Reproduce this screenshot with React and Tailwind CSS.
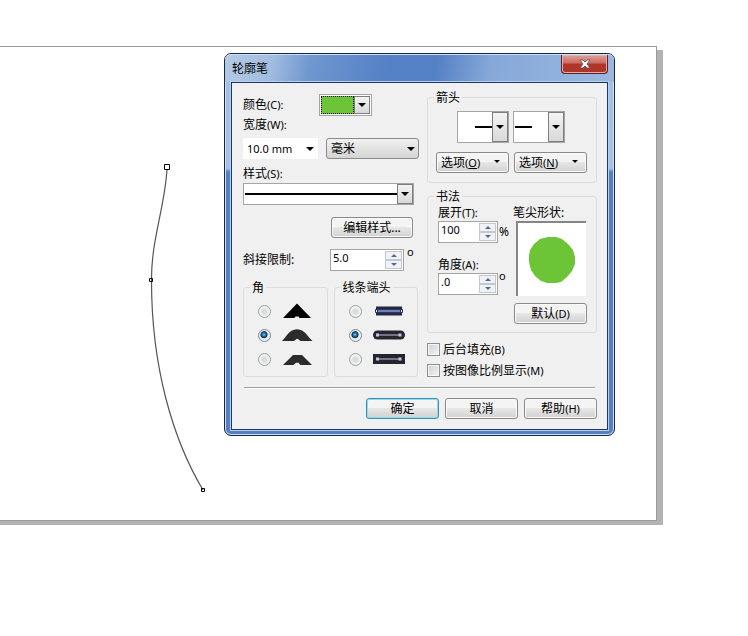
import React, { useState } from 'react';
import clsx from 'clsx';

const BTN = 'h-[21px] rounded-[3px] border border-[#8a8a8a] bg-linear-to-b from-[#f4f4f4] from-45% via-[#e6e6e6] via-50% to-[#d2d2d2] shadow-[inset_0_0_0_1px_#fafafa]';

const Arrow = ({ className }) => (
  <svg viewBox="0 0 8 4" className={clsx('h-1 w-2 shrink-0', className)} fill="#000">
    <path d="M0 0h8L4 4z" />
  </svg>
);

// Chinese caption followed by its smaller latin shortcut
const Caption = ({ text, hot }) => (
  <>{text}<span className="text-[11px]">{hot}</span></>
);

const Button = ({ children, className, primary }) => (
  <button type="button"
    className={clsx(BTN, 'flex w-[73px] items-center justify-center whitespace-nowrap', className,
      primary && 'border-[#3c8fb0]! shadow-[inset_0_0_0_1px_#8fdcf0]!')}>
    {children}
  </button>
);

const OptionButton = ({ hot }) => (
  <button type="button" className={clsx(BTN, 'flex w-[73px] items-center justify-between pl-1 pr-2')}>
    <span>选项<span className="text-[11px]">(<u>{hot}</u>)</span></span>
    <Arrow className="mb-0.5 h-[3px]! w-1.5!" />
  </button>
);

const DropBox = ({ label, className, children }) => (
  <button type="button" aria-label={label} aria-haspopup="listbox"
    className={clsx('flex border border-[#a5a5a5] bg-white', className)}>
    <span className="flex h-full flex-1 items-center">{children}</span>
    <span className="flex h-full w-4 items-center justify-center border border-[#7d7d7d] bg-linear-to-b from-[#f4f4f4] to-[#d8d8d8]">
      <Arrow />
    </span>
  </button>
);

const Select = ({ label, value, options, className }) => (
  <span className="relative flex">
    <select aria-label={label} defaultValue={value}
      className={clsx('h-[21px] w-full appearance-none pl-1', className)}>
      {options.map(o => <option key={o}>{o}</option>)}
    </select>
    <Arrow className="pointer-events-none absolute right-1 top-[9px]" />
  </span>
);

const Spinner = ({ id, initial, step, digits, className }) => {
  const [value, setValue] = useState(initial);
  const bump = d => setValue(((parseFloat(value) || 0) + d).toFixed(digits));
  return (
    <span className={clsx('flex h-[22px] border border-[#a5a5a5] bg-white p-px', className)}>
      <input id={id} value={value} onChange={e => setValue(e.target.value)}
        className="min-w-0 flex-1 pb-1 pl-px text-[11px] outline-none" />
      <span className="flex w-[17px] flex-col">
        <button type="button" aria-label="+" onClick={() => bump(step)}
          className="flex flex-1 items-center justify-center border border-[#c3c7d0] bg-[#f1f2f5]">
          <svg viewBox="0 0 6 3" className="h-[3px] w-1.5" fill="#53679f"><path d="M0 3h6L3 0z" /></svg>
        </button>
        <button type="button" aria-label="-" onClick={() => bump(-step)}
          className="flex flex-1 items-center justify-center border border-[#c3c7d0] bg-[#f1f2f5]">
          <svg viewBox="0 0 6 3" className="h-[3px] w-1.5" fill="#53679f"><path d="M0 0h6L3 3z" /></svg>
        </button>
      </span>
    </span>
  );
};

const Group = ({ title, className, children }) => (
  <fieldset className={clsx('rounded-[3px] border border-[#dadcdd] px-2', className)}>
    <legend className="-mx-0.5 h-4 px-0.5 leading-[18px]">{title}</legend>
    {children}
  </fieldset>
);

const CORNERS = [
  { id: '尖角', art: <path d="M1 16 15 1.500 29 16H17.500l-1-1.500h-3l-1 1.500z" fill="#000" /> },
  { id: '圆角', art: <path d="M0 15C3 12 6 7 9.500 4.800 13 2.800 17 2.800 20.500 4.800 24 7 27 12 30.500 15H18.500l-2.500-2h-1.500l-2.500 2z" fill="#2b2b2b" /> },
  { id: '斜角', art: <path d="M1 15 11 5h9L30 15H18.500l-2-2.300h-2.500L11.500 15z" fill="#2b2b2b" /> },
];

const CapLine = ({ x1, x2 }) => (
  <g fill="#c4c2ee">
    <path d={`M${x1} 8.500H${x2}v1H${x1}z`} />
    <rect x={x1 - 1.5} y="7.500" width="3" height="3" />
    <rect x={x2 - 1.5} y="7.500" width="3" height="3" />
  </g>
);

const CAPS = [
  { id: '方形', art: (
    <>
      <path d="M3 4.500h26v9H3z" fill="#252b30" />
      <path d="M3 7h26v4H3z" fill="#27337c" />
      <path d="M3 8.500h26v1H3z" fill="#c3cdf2" />
      <path d="M2.500 7.500h2v3h-2zM27.500 7.500h2v3h-2z" fill="#fff" stroke="#1f2a70" />
    </>
  ) },
  { id: '圆形', art: <><rect x="0" y="4.500" width="32" height="9" rx="4.500" fill="#26252b" /><CapLine x1={4.5} x2={27} /></> },
  { id: '延伸', art: <><path d="M0 4h32v10H0z" fill="#24252b" /><CapLine x1={4.5} x2={27} /></> },
];

const RadioList = ({ name, items }) => {
  const [picked, setPicked] = useState(items[1].id);
  return (
    <div className="flex flex-col pb-[5px] pl-1.5 pt-1">
      {items.map(({ id, art }) => (
        <label key={id} className="flex h-6 items-center gap-[11px]">
          <input type="radio" name={name} aria-label={id} checked={picked === id} onChange={() => setPicked(id)}
            className="size-[13px] shrink-0 appearance-none rounded-full border border-[#9a9c9e] bg-[radial-gradient(circle,#d9dbdc_25%,#f3f3f3_60%)] shadow-[inset_0_0_0_1px_#f4f4f4] checked:border-[#7b8590] checked:bg-[radial-gradient(circle_at_45%_42%,#7fd4f4_0%,#1d6fa5_20%,#0d3453_36%,#e4eaee_46%)]" />
          <svg viewBox="0 0 32 18" className="h-[18px] w-8 shrink-0">{art}</svg>
        </label>
      ))}
    </div>
  );
};

const Check = ({ text, hot }) => (
  <label className="flex h-[21px] items-center gap-[3px] whitespace-nowrap">
    <input type="checkbox"
      className="size-[13px] appearance-none border border-[#8e8f8f] bg-linear-to-br from-[#cfd2d4] to-[#f4f4f4] shadow-[inset_0_0_0_1px_#f4f4f4] checked:from-[#2a6fa5] checked:to-[#2a6fa5]" />
    <span><Caption text={text} hot={hot} /></span>
  </label>
);

const OutlineDialog = () => (
  <div role="dialog" aria-label="轮廓笔"
    className="flex w-[391px] shrink-0 flex-col rounded-[7px] border border-[#14264a] bg-linear-to-b from-[#a3c0e4] from-0% via-[#a5c1e6] via-30% to-[#5580bd] to-31% shadow-[inset_0_0_0_1px_#cfe0f4]">
    <div className="flex h-[28px] items-start justify-between rounded-t-[6px] border-t border-[#cfe0f4] bg-[linear-gradient(100deg,#b4cae6_0%,#a3bde0_12%,#6f97cf_22%,#5480c5_42%,#5480c5_54%,#86a8d9_68%,#9ab8e0_100%)] pl-[7px] pr-1.5">
      <h1 className="pt-[5px] leading-[18px]">轮廓笔</h1>
      <button type="button" aria-label="关闭"
        className="flex h-[19px] w-[47px] items-center justify-center rounded-b-[4px] border border-t-0 border-[#5c1f24] bg-linear-to-b from-[#dba29a] from-0% via-[#cb6a5f] via-45% to-[#b03529] to-50% shadow-[inset_0_0_0_1px_#e3b0a8]">
        <svg viewBox="0 0 12 10" className="h-2.5 w-3">
          <path d="M1 1h3l2 2 2-2h3L8 5l3 4H8L6 7 4 9H1l3-4z" fill="#fff" stroke="#5b4b58" strokeWidth=".8" />
        </svg>
      </button>
    </div>

    <div className="mx-1.5 mb-[5px] border border-[#1d3668] bg-[#f0f0f0] px-[10px] pb-[10px] shadow-[0_0_0_1px_#b9d0ee]">
      <div className="flex justify-between">
        <div className="w-[177px] pl-px pt-[11px]">
          <div className="flex items-center">
            <span className="w-[76px] leading-[18px]"><Caption text="颜色" hot="(C):" /></span>
            <DropBox label="颜色" className="h-[22px] w-[53px] p-px">
              <span className="h-full w-full border border-dotted border-black bg-[#6cc437]" />
            </DropBox>
          </div>
          <div className="h-4 leading-[18px]"><Caption text="宽度" hot="(W):" /></div>
          <div className="mt-1.5 grid grid-cols-[75px_93px] justify-between">
            <Select label="宽度" value="10.0 mm" options={['0.2 mm', '1.0 mm', '10.0 mm']} className="bg-white text-[11px]" />
            <Select label="单位" value="毫米" options={['毫米', '厘米', '英寸']}
              className="rounded-[3px] border border-[#8a8a8a] bg-linear-to-b from-[#f1f1f1] to-[#d4d4d4]" />
          </div>
          <div className="mt-1.5 h-4 leading-[18px]"><Caption text="样式" hot="(S):" /></div>
          <DropBox label="样式" className="mt-0.5 h-[22px] w-[171px] pl-px">
            <span className="h-0.5 w-full bg-black" />
          </DropBox>
          <Button className="ml-[88px] mt-3 w-[82px]!">编辑样式...</Button>
          <div className="mt-[11px] flex h-[22px]">
            <label htmlFor="miter" className="w-[87px] self-center">斜接限制:</label>
            <Spinner id="miter" initial="5.0" step={1} digits={1} className="w-[74px]" />
            <span className="-mt-[3px] pl-[3px] text-[11px] leading-none">o</span>
          </div>
          <div className="mt-2 grid w-[175px] grid-cols-2 gap-1.5">
            <Group title="角"><RadioList name="corner" items={CORNERS} /></Group>
            <Group title="线条端头"><RadioList name="cap" items={CAPS} /></Group>
          </div>
        </div>

        <div className="w-[170px] pt-1.5">
          <Group title="箭头" className="pb-[9px]">
            <div className="flex gap-1 pl-[21px] pt-1.5">
              <DropBox label="起始箭头" className="h-8 w-[52px]"><span className="ml-auto h-0.5 w-[17px] bg-black" /></DropBox>
              <DropBox label="终止箭头" className="h-8 w-[52px]"><span className="ml-px h-0.5 w-[17px] bg-black" /></DropBox>
            </div>
            <div className="mt-[9px] flex gap-[5px]">
              <OptionButton hot="O" />
              <OptionButton hot="N" />
            </div>
          </Group>

          <Group title="书法" className="mt-[5px] pb-2">
            <div className="flex justify-between pr-px">
              <div className="flex flex-col pl-0.5">
                <label htmlFor="stretch" className="h-4 leading-[18px]"><Caption text="展开" hot="(T):" /></label>
                <div className="mt-px flex items-center">
                  <Spinner id="stretch" initial="100" step={1} digits={0} className="w-[60px]" />
                  <span className="pl-px leading-[18px]">%</span>
                </div>
                <label htmlFor="angle" className="mt-[13px] h-4 leading-[18px]"><Caption text="角度" hot="(A):" /></label>
                <div className="mt-px flex h-[22px]">
                  <Spinner id="angle" initial=".0" step={1} digits={1} className="w-[60px]" />
                  <span className="-mt-[3px] pl-px text-[11px] leading-none">o</span>
                </div>
              </div>
              <div className="flex w-[74px] flex-col items-end">
                <span className="h-4 self-start whitespace-nowrap leading-[18px]">笔尖形状:</span>
                <div className="mr-px mt-px flex h-[75px] w-[70px] items-center justify-center border-l-2 border-t-2 border-[#858585] bg-white">
                  <svg viewBox="0 0 46 46" className="size-[46px]" fill="#6cc437">
                    <path d="M19 0h8l6 2 6 5 5 6 2 7v7l-3 7-5 6-6 5-5 1h-9l-6-2-6-5-4-6-2-8v-6l1-6 4-6 6-5z" />
                  </svg>
                </div>
                <Button className="mt-[7px]"><Caption text="默认" hot="(D)" /></Button>
              </div>
            </div>
          </Group>

          <div className="mt-1.5">
            <Check text="后台填充" hot="(B)" />
            <Check text="按图像比例显示" hot="(M)" />
          </div>
        </div>
      </div>

      <div className="mx-0.5 mt-1.5 border-b border-t border-b-white border-t-[#a0a0a0]" />
      <div className="mt-[9px] flex justify-end gap-1.5">
        <Button primary>确定</Button>
        <Button>取消</Button>
        <Button><Caption text="帮助" hot="(H)" /></Button>
      </div>
    </div>
  </div>
);

const App = () => (
  <main className="min-h-screen bg-white pt-[46px] font-['Noto_Sans','Noto_Sans_CJK_SC',sans-serif] text-[12px] leading-4 text-black">
    <div className="mr-[91px] flex border-b border-r border-t border-[#9a9a9a] bg-white pb-[84px] pt-1.5 shadow-[6px_4px_0_#b3b3b3,0_4px_0_#b3b3b3]">
      {/* Curve being edited, with its nodes */}
      <svg viewBox="0 53 224 450" className="-mb-[67px] h-[450px] w-[224px] shrink-0" fill="none" stroke="#000">
        <path d="M167 169C165 207 151 240 151.500 281C151.500 365 172 438 203 490" stroke="#555" strokeWidth="1.200" />
        <path d="M164.500 164.500h5v5h-5z" fill="#fff" />
        <path d="M149.500 278.500h3v3h-3zM201.500 488.500h3v3h-3z" />
      </svg>
      <OutlineDialog />
    </div>
  </main>
);

export default App;
